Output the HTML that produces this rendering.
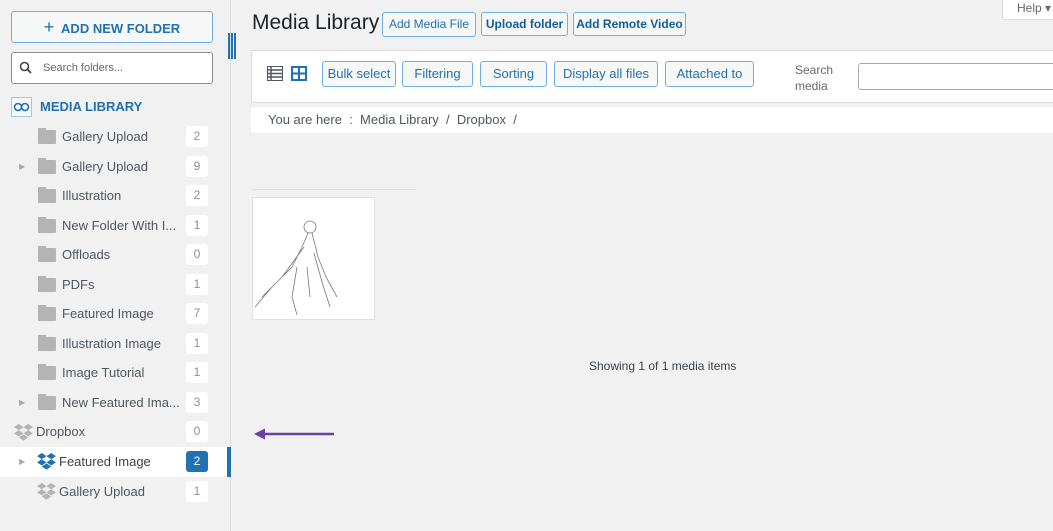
<!DOCTYPE html>
<html><head><meta charset="utf-8"><style>
*{box-sizing:border-box;margin:0;padding:0}
body{width:1053px;height:531px;overflow:hidden;background:#f1f1f1;font-family:"Liberation Sans",sans-serif;color:#3c434a;position:relative}
.abs{position:absolute}
.side{left:0;top:0;width:231px;height:531px;border-right:1px solid #dcdcde}
.btn1{left:11px;top:11px;width:202px;height:32px;border:1px solid #72aee6;border-radius:3px;background:#f6f7f7;color:#2271b1;font-weight:bold;font-size:13px;text-align:center;line-height:30px}
.srch{left:11px;top:52px;width:202px;height:32px;border:1px solid #8c8f94;border-radius:3px;background:#fff;font-size:11px;color:#646970;line-height:30px;padding-left:31px}
.row{left:0;width:227px;height:29.5px;font-size:13px;line-height:29.5px;color:#50575e}
.row .ic{position:absolute;left:38px;top:8px;width:18px;height:14px;background:#b4b4b4;border-radius:1px}
.row .ic:before{content:"";position:absolute;left:0;top:-2px;width:8px;height:3px;background:#b4b4b4}
.row .t{position:absolute;left:62px}
.row .c{position:absolute;left:186px;top:4px;width:22px;height:21px;background:#fff;border-radius:3px;text-align:center;line-height:21px;font-size:12px;color:#8c8f94}
.row .ar{position:absolute;left:19px;top:0;font-size:8px;color:#a7aaad}
.b{position:absolute;border:1px solid #2271b1;border-radius:3px;background:#f6f7f7;color:#2271b1;font-size:13px;text-align:center}
</style></head><body>
<div class="abs side"></div>
<div class="abs btn1"><span style="font-size:18px;font-weight:normal">+</span>&nbsp; ADD NEW FOLDER</div>
<div class="abs srch">Search folders...</div>
<svg class="abs" style="left:19px;top:61px" width="14" height="14"><circle cx="5.5" cy="5.5" r="4" fill="none" stroke="#3c434a" stroke-width="1.6"/><path d="M8.5 8.5L12 12" stroke="#3c434a" stroke-width="1.8"/></svg>
<div class="abs" style="left:11px;top:97px;width:21px;height:20px;border:1px solid #a7c6e0;background:#f6f7f7"></div>
<svg class="abs" style="left:13px;top:102px" width="17" height="10"><circle cx="5" cy="5" r="3.5" fill="none" stroke="#2271b1" stroke-width="1.6"/><circle cx="12" cy="5" r="3.5" fill="none" stroke="#2271b1" stroke-width="1.6"/></svg>
<div class="abs" style="left:40px;top:99px;font-size:13px;font-weight:bold;color:#2271b1">MEDIA LIBRARY</div>
<div class="abs" style="left:228px;top:33px;width:8px;height:26px;border-left:2px solid #2271b1;border-right:2px solid #2271b1"><div style="margin-left:1px;width:2px;height:26px;background:#2271b1"></div></div>

<div class="abs row" style="top:122px"><div class="ic"></div><span class="t">Gallery Upload</span><span class="c">2</span></div>
<div class="abs row" style="top:152px"><span class="ar">▶</span><div class="ic"></div><span class="t">Gallery Upload</span><span class="c">9</span></div>
<div class="abs row" style="top:181px"><div class="ic"></div><span class="t">Illustration</span><span class="c">2</span></div>
<div class="abs row" style="top:211px"><div class="ic"></div><span class="t">New Folder With I...</span><span class="c">1</span></div>
<div class="abs row" style="top:240px"><div class="ic"></div><span class="t">Offloads</span><span class="c">0</span></div>
<div class="abs row" style="top:270px"><div class="ic"></div><span class="t">PDFs</span><span class="c">1</span></div>
<div class="abs row" style="top:299px"><div class="ic"></div><span class="t">Featured Image</span><span class="c">7</span></div>
<div class="abs row" style="top:329px"><div class="ic"></div><span class="t">Illustration Image</span><span class="c">1</span></div>
<div class="abs row" style="top:358px"><div class="ic"></div><span class="t">Image Tutorial</span><span class="c">1</span></div>
<div class="abs row" style="top:388px"><span class="ar">▶</span><div class="ic"></div><span class="t">New Featured Ima...</span><span class="c">3</span></div>
<div class="abs row" style="top:417px"><span class="t" style="left:36px">Dropbox</span><span class="c">0</span></div>
<div class="abs row" style="top:447px;background:#fff"><span class="ar">▶</span><span class="t" style="left:59px;color:#3c434a">Featured Image</span><span class="c" style="background:#2271b1;color:#fff">2</span></div>
<div class="abs" style="left:227px;top:447px;width:4px;height:30px;background:#2271b1"></div>
<div class="abs row" style="top:477px"><span class="t" style="left:59px">Gallery Upload</span><span class="c">1</span></div>
<svg class="abs" style="left:14px;top:424px" width="19" height="17" viewBox="0 0 20 18"><path d="M5 0L0 3.3 5 6.6 10 3.3ZM15 0L10 3.3 15 6.6 20 3.3ZM0 9.9L5 13.2 10 9.9 5 6.6ZM15 6.6L10 9.9 15 13.2 20 9.9ZM5 14.3L10 17.6 15 14.3 10 11Z" fill="#b4b4b4"/></svg>
<svg class="abs" style="left:37px;top:453px" width="19" height="17" viewBox="0 0 20 18"><path d="M5 0L0 3.3 5 6.6 10 3.3ZM15 0L10 3.3 15 6.6 20 3.3ZM0 9.9L5 13.2 10 9.9 5 6.6ZM15 6.6L10 9.9 15 13.2 20 9.9ZM5 14.3L10 17.6 15 14.3 10 11Z" fill="#2271b1"/></svg>
<svg class="abs" style="left:37px;top:483px" width="19" height="17" viewBox="0 0 20 18"><path d="M5 0L0 3.3 5 6.6 10 3.3ZM15 0L10 3.3 15 6.6 20 3.3ZM0 9.9L5 13.2 10 9.9 5 6.6ZM15 6.6L10 9.9 15 13.2 20 9.9ZM5 14.3L10 17.6 15 14.3 10 11Z" fill="#b4b4b4"/></svg>

<div class="abs" style="left:252px;top:11px;font-size:21px;color:#1d2327">Media Library</div>
<div class="b" style="left:382px;top:12px;width:94px;height:25px;line-height:23px;font-size:12px;border-color:#72aee6">Add Media File</div>
<div class="b" style="left:481px;top:12px;width:87px;height:24px;line-height:22px;font-size:12px;font-weight:bold;color:#135e96;border-color:#72aee6">Upload folder</div>
<div class="b" style="left:573px;top:12px;width:113px;height:24px;line-height:22px;font-size:12px;font-weight:bold;color:#135e96;border-color:#72aee6">Add Remote Video</div>
<div class="abs" style="left:1002px;top:-2px;width:60px;height:22px;background:#fff;border:1px solid #dcdcde;border-radius:3px;font-size:12px;line-height:18px;padding-left:14px;color:#646970">Help ▾</div>

<div class="abs" style="left:251px;top:50px;width:810px;height:53px;background:#fff;border:1px solid #dcdcde"></div>
<svg class="abs" style="left:267px;top:66px" width="16" height="15"><rect x="0.5" y="0.5" width="15" height="14" fill="none" stroke="#50575e"/><path d="M1 4h14M1 7.5h14M1 11h14M4 1v13" stroke="#50575e" stroke-width="1.5"/></svg>
<svg class="abs" style="left:291px;top:66px" width="16" height="15"><rect x="1" y="1" width="14" height="13" fill="none" stroke="#2271b1" stroke-width="2"/><path d="M8 1v13M1 7.5h14" stroke="#2271b1" stroke-width="2"/></svg>
<div class="b" style="left:322px;top:61px;width:74px;height:26px;line-height:24px;border-color:#72aee6">Bulk select</div>
<div class="b" style="left:402px;top:61px;width:71px;height:26px;line-height:24px;border-color:#72aee6">Filtering</div>
<div class="b" style="left:480px;top:61px;width:67px;height:26px;line-height:24px;border-color:#72aee6">Sorting</div>
<div class="b" style="left:554px;top:61px;width:104px;height:26px;line-height:24px;border-color:#72aee6">Display all files</div>
<div class="b" style="left:665px;top:61px;width:89px;height:26px;line-height:24px;border-color:#72aee6">Attached to</div>
<div class="abs" style="left:795px;top:62px;font-size:12px;line-height:16px;color:#646970">Search<br>media</div>
<div class="abs" style="left:858px;top:63px;width:200px;height:27px;border:1px solid #a7aaad;border-radius:3px;background:#fff"></div>

<div class="abs" style="left:251px;top:107px;width:810px;height:26px;background:#fff;font-size:13px;line-height:26px;padding-left:17px;color:#50575e">You are here &nbsp;:&nbsp; Media Library &nbsp;/&nbsp; Dropbox &nbsp;/</div>
<div class="abs" style="left:252px;top:189px;width:164px;height:1px;background:#e0e0e0"></div>
<div class="abs" style="left:252px;top:197px;width:123px;height:123px;background:#fff;border:1px solid #e0e0e0"></div>
<svg class="abs" style="left:252px;top:197px" width="123" height="123"><g fill="none" stroke="#777" stroke-width="0.8"><circle cx="58" cy="30" r="6"/><path d="M56 36L50 50 40 70 20 90 3 110M60 36L66 60 74 80 85 100M52 50L30 80 10 100M62 56L70 85 78 110M45 70L40 100 45 118M55 70L58 100"/></g></svg>
<div class="abs" style="left:589px;top:359px;font-size:12px;color:#3c434a">Showing 1 of 1 media items</div>
<svg class="abs" style="left:252px;top:427px" width="84" height="14"><path d="M82 7H8" stroke="#6b3fa0" stroke-width="2.5"/><path d="M2 7L13 1.5 13 12.5Z" fill="#6b3fa0"/></svg>
</body></html>
